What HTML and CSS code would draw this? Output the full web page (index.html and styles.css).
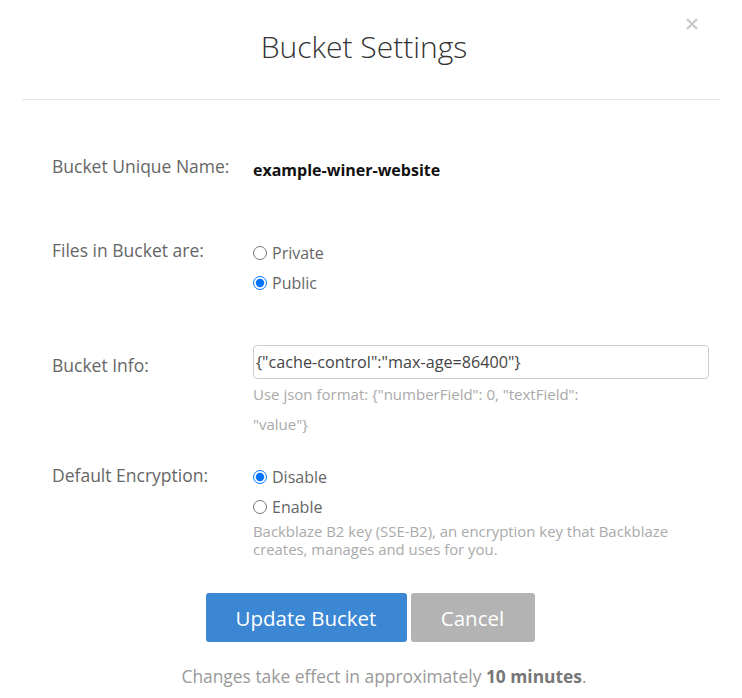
FILE: index.html
```html
<!DOCTYPE html>
<html>
<head>
<meta charset="utf-8">
<link rel="stylesheet" href="styles.css">
</head>
<body>
<div class="modal">
  <div class="header">
    <h1 class="title">Bucket Settings</h1>
    <svg class="close" width="12" height="12" viewBox="0 0 12 12"><path d="M1 1 L11 11 M11 1 L1 11" stroke="#c9c9c9" stroke-width="2.2" fill="none"/></svg>
  </div>
  <div class="content">
    <div class="row row-name">
      <div class="label">Bucket Unique Name:</div>
      <div class="value name">example-winer-website</div>
    </div>
    <div class="row row-files">
      <div class="label">Files in Bucket are:</div>
      <div class="value">
        <label class="radio"><input type="radio" name="files"> Private</label>
        <label class="radio"><input type="radio" name="files" checked> Public</label>
      </div>
    </div>
    <div class="row row-info">
      <div class="label label-info">Bucket Info:</div>
      <div class="value">
        <input class="text-input" type="text" value='{"cache-control":"max-age=86400"}'>
        <div class="help">Use json format: {"numberField": 0, "textField":<br>"value"}</div>
      </div>
    </div>
    <div class="row row-enc">
      <div class="label label-enc">Default Encryption:</div>
      <div class="value">
        <label class="radio"><input type="radio" name="enc" checked> Disable</label>
        <label class="radio"><input type="radio" name="enc"> Enable</label>
        <div class="desc">Backblaze B2 key (SSE-B2), an encryption key that Backblaze<br>creates, manages and uses for you.</div>
      </div>
    </div>
    <div class="buttons">
      <button class="btn btn-primary">Update Bucket</button>
      <button class="btn btn-cancel">Cancel</button>
    </div>
    <p class="footer-note">Changes take effect in approximately <b>10 minutes</b>.</p>
  </div>
</div>
</body>
</html>
```
FILE: styles.css
```css
html, body {
  margin: 0;
  padding: 0;
  background: #fff;
}
body {
  font-family: "Open Sans", "Liberation Sans", sans-serif;
  color: #666;
}
.modal {
  position: relative;
  width: 742px;
  padding: 0 22px;
  box-sizing: border-box;
}
.header {
  height: 99px;
  border-bottom: 1px solid #e5e5e5;
  box-sizing: content-box;
}
.title {
  margin: 0 14px 0 0;
  padding-top: 27px;
  font-size: 30px;
  font-weight: 300;
  line-height: 40px;
  color: #333;
  text-align: center;
}
.close {
  position: absolute;
  top: 18px;
  left: 686px;
}
.content {
  padding: 0 0 0 30px;
}
.row {
  display: grid;
  grid-template-columns: 201px 1fr;
  align-items: start;
}
.label {
  font-size: 17.5px;
  line-height: 24px;
  color: #666;
}
.row-name {
  margin-top: 54px;
}
.name {
  padding-top: 4px;
  font-size: 16px;
  line-height: 24px;
  font-weight: 700;
  color: #111;
}
.row-files {
  margin-top: 56px;
}
.radio {
  display: flex;
  align-items: center;
  height: 30px;
  font-size: 16px;
  color: #666;
}
.radio input {
  margin: 0 5px 0 0;
  width: 14px;
  height: 14px;
}
.row-info {
  margin-top: 47px;
}
.label-info {
  padding-top: 8px;
}
.text-input {
  display: block;
  box-sizing: border-box;
  width: 456px;
  height: 34px;
  margin: 0;
  padding: 0 2px;
  border: 1px solid #ccc;
  border-radius: 4px;
  font-family: "Open Sans", "Liberation Sans", sans-serif;
  font-size: 16.2px;
  color: #444;
  outline: none;
}
.help {
  font-size: 15px;
  line-height: 30px;
  color: #aaa;
}
.row-enc {
  margin-top: 23px;
}
.label-enc {
  padding-top: 1px;
}
.desc {
  font-size: 14.9px;
  line-height: 18px;
  color: #aaa;
}
.buttons {
  display: flex;
  justify-content: center;
  gap: 4px;
  margin-top: 35px;
  margin-left: -32px;
}
.btn {
  height: 49px;
  border: none;
  border-radius: 3px;
  font-family: "Open Sans", "Liberation Sans", sans-serif;
  font-size: 20.5px;
  color: #fff;
  padding: 0;
}
.btn-primary {
  width: 201px;
  background: #3b87d4;
}
.btn-cancel {
  width: 124px;
  background: #b3b3b3;
}
.footer-note {
  margin: 22px 0 0 -4px;
  text-align: center;
  font-size: 17.4px;
  line-height: 24px;
  color: #999;
}
.footer-note b {
  color: #777;
}
```
